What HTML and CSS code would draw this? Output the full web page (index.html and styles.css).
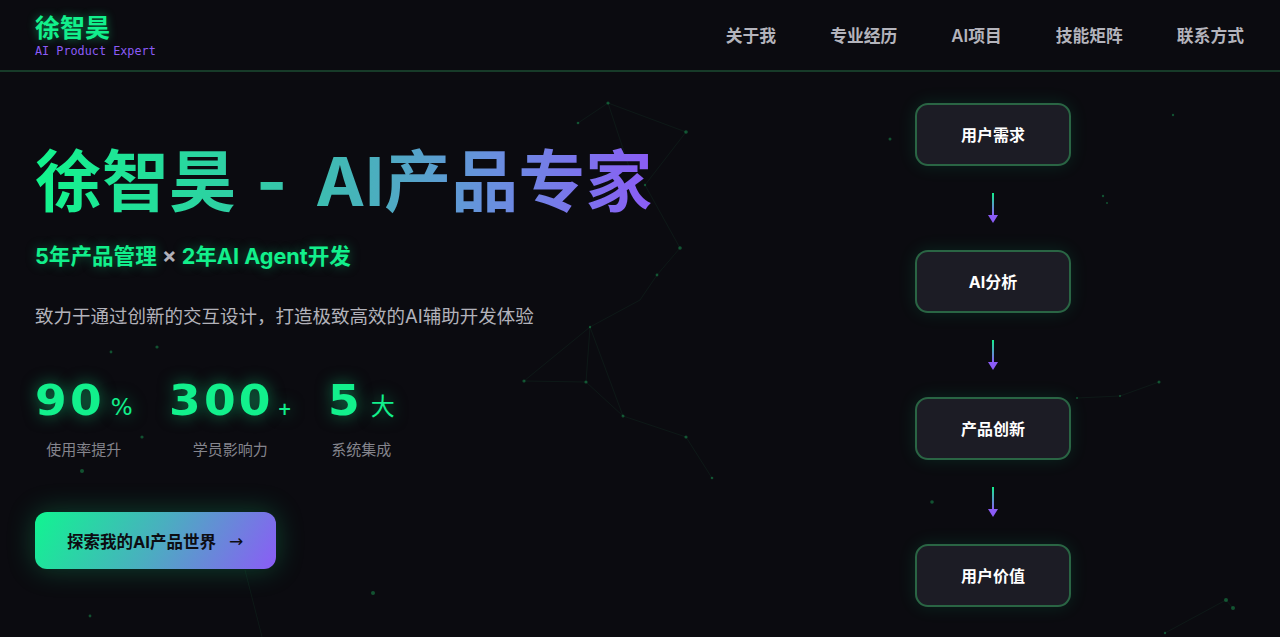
FILE: index.html
```html
<!DOCTYPE html>
<html lang="zh">
<head>
<meta charset="utf-8">
<title>徐智昊 - AI产品专家</title>
<link rel="stylesheet" href="styles.css">
</head>
<body>
<svg class="particles" width="1280" height="637" viewBox="0 0 1280 637" aria-hidden="true">
  <g class="links">
    <line x1="608" y1="103" x2="578" y2="123"/>
    <line x1="608" y1="103" x2="686" y2="132"/>
    <line x1="608" y1="103" x2="630" y2="170"/>
    <line x1="686" y1="132" x2="645" y2="185"/>
    <line x1="645" y1="185" x2="680" y2="248"/>
    <line x1="680" y1="248" x2="657" y2="275"/>
    <line x1="657" y1="275" x2="640" y2="300"/>
    <line x1="640" y1="300" x2="590" y2="327"/>
    <line x1="590" y1="327" x2="524" y2="381"/>
    <line x1="590" y1="327" x2="586" y2="382"/>
    <line x1="590" y1="327" x2="623" y2="416"/>
    <line x1="524" y1="381" x2="586" y2="382"/>
    <line x1="586" y1="382" x2="623" y2="416"/>
    <line x1="623" y1="416" x2="686" y2="437"/>
    <line x1="686" y1="437" x2="712" y2="478"/>
    <line x1="1077" y1="398" x2="1120" y2="396"/>
    <line x1="1120" y1="396" x2="1159" y2="382"/>
    <line x1="1165" y1="633" x2="1226" y2="600"/>
    <line x1="1226" y1="600" x2="1233" y2="608"/>
    <line x1="245" y1="570" x2="262" y2="637"/>
  </g>
  <g class="dots">
    <circle cx="608" cy="103" r="1.6"/>
    <circle cx="578" cy="123" r="1.3"/>
    <circle cx="686" cy="132" r="1.8"/>
    <circle cx="890" cy="139" r="1.5"/>
    <circle cx="1173" cy="115" r="1.2"/>
    <circle cx="1103" cy="196" r="1.2"/>
    <circle cx="1107" cy="203" r="1"/>
    <circle cx="680" cy="248" r="1.8"/>
    <circle cx="657" cy="275" r="1.4"/>
    <circle cx="645" cy="185" r="1.2"/>
    <circle cx="590" cy="327" r="1.2"/>
    <circle cx="524" cy="381" r="1.6"/>
    <circle cx="586" cy="382" r="1.6"/>
    <circle cx="623" cy="416" r="1.5"/>
    <circle cx="686" cy="437" r="1.6"/>
    <circle cx="712" cy="478" r="1.3"/>
    <circle cx="157" cy="347" r="1.6"/>
    <circle cx="111" cy="352" r="1.4"/>
    <circle cx="142" cy="437" r="1.6"/>
    <circle cx="82" cy="471" r="2"/>
    <circle cx="90" cy="616" r="1.4"/>
    <circle cx="373" cy="593" r="2"/>
    <circle cx="1077" cy="398" r="1"/>
    <circle cx="1120" cy="396" r="1"/>
    <circle cx="1159" cy="382" r="1.5"/>
    <circle cx="932" cy="502" r="1.8"/>
    <circle cx="1226" cy="600" r="2"/>
    <circle cx="1233" cy="608" r="2"/>
    <circle cx="1165" cy="633" r="1.2"/>
  </g>
</svg>

<header class="site-header">
  <div class="brand">
    <div class="brand-name">徐智昊</div>
    <div class="brand-sub">AI Product Expert</div>
  </div>
  <nav class="nav">
    <a class="nav-link" href="#about">关于我</a>
    <a class="nav-link" href="#exp">专业经历</a>
    <a class="nav-link" href="#ai">AI项目</a>
    <a class="nav-link" href="#skills">技能矩阵</a>
    <a class="nav-link" href="#contact">联系方式</a>
  </nav>
</header>

<main class="hero">
  <section class="hero-left">
    <h1 class="hero-title">徐智昊<span class="title-dash">-</span>AI产品专家</h1>
    <p class="hero-tagline">5年产品管理 <span class="times">×</span> 2年AI Agent开发</p>
    <p class="hero-desc">致力于通过创新的交互设计，打造极致高效的AI辅助开发体验</p>

    <div class="stats">
      <div class="stat">
        <div class="stat-value"><span class="num">90</span><span class="unit">%</span></div>
        <div class="stat-label">使用率提升</div>
      </div>
      <div class="stat">
        <div class="stat-value"><span class="num">300</span><span class="unit unit-plus">+</span></div>
        <div class="stat-label">学员影响力</div>
      </div>
      <div class="stat">
        <div class="stat-value"><span class="num">5</span><span class="unit unit-cjk">大</span></div>
        <div class="stat-label">系统集成</div>
      </div>
    </div>

    <a class="cta" href="#ai">探索我的AI产品世界 <span class="cta-arrow">→</span></a>
  </section>

  <section class="flow">
    <div class="flow-node">用户需求</div>
    <div class="flow-arrow"><span class="arrow-line"></span><span class="arrow-head"></span></div>
    <div class="flow-node">AI分析</div>
    <div class="flow-arrow"><span class="arrow-line"></span><span class="arrow-head"></span></div>
    <div class="flow-node">产品创新</div>
    <div class="flow-arrow"><span class="arrow-line"></span><span class="arrow-head"></span></div>
    <div class="flow-node">用户价值</div>
  </section>
</main>
</body>
</html>
```

FILE: styles.css
```css
* { box-sizing: border-box; }

html, body {
  margin: 0;
  padding: 0;
  background: #0b0b10;
  color: #e8e8ee;
  font-family: "Inter", "Noto Sans CJK SC", sans-serif;
  height: 637px;
  overflow: hidden;
}

body { position: relative; }

.particles {
  position: absolute;
  left: 0;
  top: 0;
  z-index: 0;
  pointer-events: none;
}
.particles .links line {
  stroke: rgba(40, 150, 90, 0.1);
  stroke-width: 1;
}
.particles .dots circle {
  fill: rgba(30, 190, 100, 0.4);
}

.site-header {
  position: relative;
  z-index: 1;
  height: 72px;
  display: flex;
  align-items: center;
  justify-content: space-between;
  padding: 0 36px 0 35px;
  border-bottom: 2px solid #173b29;
}

.brand {
  display: flex;
  flex-direction: column;
  margin-top: 0;
}
.brand-name {
  font-family: "Noto Sans CJK SC", sans-serif;
  font-weight: 700;
  font-size: 25px;
  line-height: 30px;
  color: #12f08c;
  text-shadow: 0 0 10px rgba(18, 240, 140, 0.45);
}
.brand-sub {
  font-family: "DejaVu Sans Mono", monospace;
  font-size: 11.8px;
  line-height: 16px;
  color: #8b5cf6;
  margin-top: 2px;
}

.nav {
  display: flex;
  gap: 54px;
}
.nav-link {
  font-family: "Inter", "Noto Sans CJK SC", sans-serif;
  font-size: 16.8px;
  font-weight: 600;
  color: #b4b4bc;
  text-decoration: none;
}

.hero {
  position: relative;
  z-index: 1;
  display: flex;
  justify-content: space-between;
}

.hero-left {
  padding: 72px 0 0 35px;
}

.hero-title {
  margin: 0;
  font-family: "Inter", "Noto Sans CJK SC", sans-serif;
  font-weight: 700;
  font-size: 67px;
  line-height: 76px;
  white-space: nowrap;
  display: inline-block;
  background: linear-gradient(90deg, #12f58c 0%, #3bbfae 45%, #6a8ee0 75%, #8b5cf6 100%);
  -webkit-background-clip: text;
  background-clip: text;
  color: transparent;
}
.title-dash {
  margin: 0 28px 0 20px;
}

.hero-tagline {
  margin: 21px 0 0;
  font-size: 21.6px;
  line-height: 30px;
  font-weight: 700;
  color: #12f08c;
  text-shadow: 0 0 12px rgba(18, 240, 140, 0.35);
}
.times {
  color: #b0b0b8;
  text-shadow: none;
}

.hero-desc {
  margin: 31px 0 0;
  font-size: 18.5px;
  line-height: 28px;
  color: #b2b2ba;
}

.stats {
  display: flex;
  gap: 36px;
  margin-top: 46px;
}
.stat {
  display: flex;
  flex-direction: column;
  align-items: center;
}
.stat-value {
  display: flex;
  align-items: baseline;
  gap: 6px;
  color: #12f08c;
  text-shadow: 0 0 16px rgba(18, 240, 140, 0.5);
}
.num {
  font-family: "DejaVu Sans", sans-serif;
  font-weight: 700;
  font-size: 43px;
  line-height: 48px;
  letter-spacing: 3px;
  transform: scaleX(1.06);
  transform-origin: left center;
  display: inline-block;
  margin-right: 4px;
}
.unit {
  font-family: "DejaVu Sans", sans-serif;
  font-size: 23px;
}
.unit-plus {
  font-size: 17px;
  font-weight: 700;
}
.unit-cjk {
  font-family: "Noto Sans CJK SC", sans-serif;
  font-size: 24px;
}
.stat-label {
  margin-top: 16px;
  font-size: 15px;
  line-height: 20px;
  color: #85858d;
}

.cta {
  margin-top: 52px;
  display: inline-flex;
  align-items: center;
  gap: 13px;
  height: 57px;
  padding: 0 33px 0 32px;
  border-radius: 12px;
  background: linear-gradient(120deg, #10f590 0%, #4aaec0 50%, #8b5cf6 100%);
  color: #0d0d12;
  font-size: 16.5px;
  font-weight: 700;
  text-decoration: none;
  box-shadow: 0 0 28px rgba(18, 240, 140, 0.25);
}
.cta-arrow {
  font-family: "DejaVu Sans", sans-serif;
  font-weight: 400;
  font-size: 17px;
}

.flow {
  width: 156px;
  margin-right: 209px;
  padding-top: 31px;
  display: flex;
  flex-direction: column;
  align-items: center;
}
.flow-node {
  width: 156px;
  height: 63px;
  display: flex;
  align-items: center;
  justify-content: center;
  padding-bottom: 2px;
  background: #1c1c25;
  border: 2px solid #2a6544;
  border-radius: 13px;
  box-shadow: 0 0 18px rgba(18, 240, 140, 0.12);
  color: #ffffff;
  font-size: 16px;
  font-weight: 700;
}
.flow-arrow {
  height: 84px;
  display: flex;
  flex-direction: column;
  align-items: center;
  padding-top: 27px;
}
.arrow-line {
  width: 2px;
  height: 22px;
  background: linear-gradient(180deg, #12f08c, #8b5cf6);
}
.arrow-head {
  width: 0;
  height: 0;
  border-left: 5px solid transparent;
  border-right: 5px solid transparent;
  border-top: 8px solid #8b5cf6;
}
```
